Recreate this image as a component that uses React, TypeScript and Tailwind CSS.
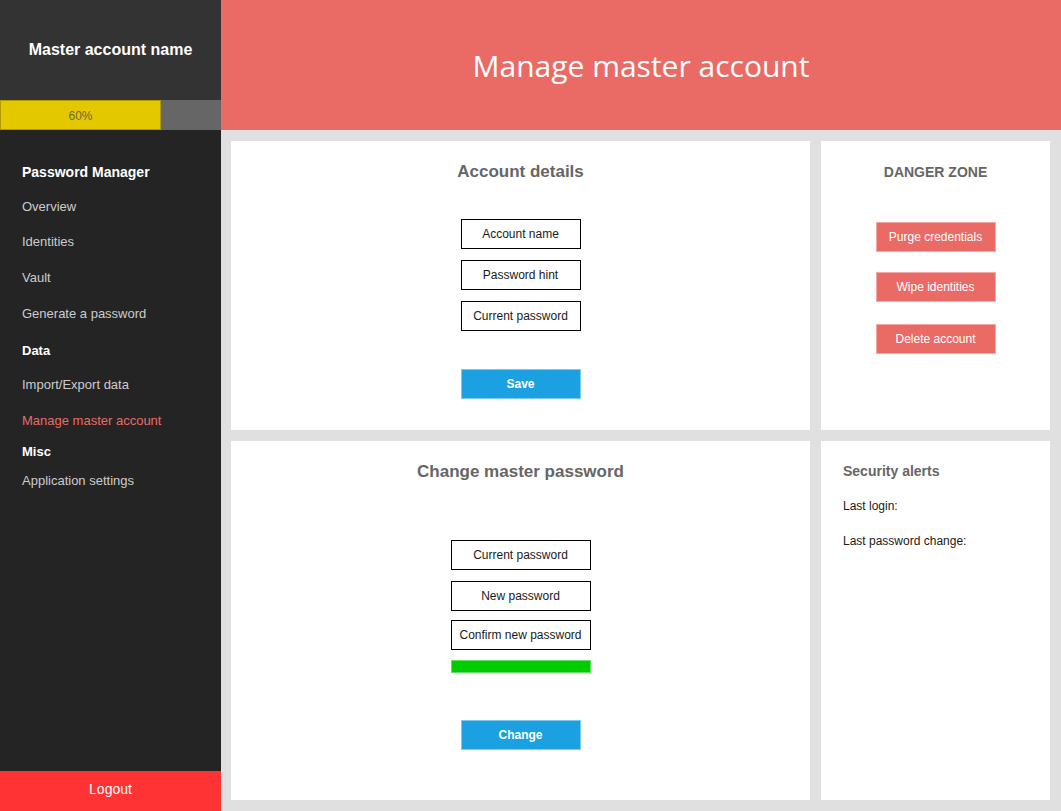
const navItems = [
  { label: "Password Manager", kind: "head" },
  { label: "Overview", kind: "item" },
  { label: "Identities", kind: "item" },
  { label: "Vault", kind: "item" },
  { label: "Generate a password", kind: "item" },
  { label: "Data", kind: "head" },
  { label: "Import/Export data", kind: "item" },
  { label: "Manage master account", kind: "active" },
  { label: "Misc", kind: "head" },
  { label: "Application settings", kind: "item" },
];

// vertical centre of each nav label, in page pixels
const navCentres = [171, 206, 241, 277, 313, 350, 384, 420, 451, 480];

function Field({ label, width }: { label: string; width: string }) {
  return (
    <div
      className={`${width} flex h-[30px] items-center justify-center border border-black bg-white text-[12px] text-[#1a1a1a]`}
    >
      {label}
    </div>
  );
}

function BlueButton({ label }: { label: string }) {
  return (
    <div className="flex h-[30px] w-[120px] items-center justify-center border border-[#7fcaf0] bg-[#1ba1e2] text-[12px] font-bold text-white">
      {label}
    </div>
  );
}

function DangerButton({ label }: { label: string }) {
  return (
    <div className="flex h-[30px] w-[120px] items-center justify-center border border-[#f5a8a5] bg-[#ea6b66] text-[12px] text-white">
      {label}
    </div>
  );
}

export default function App() {
  return (
    <div
      className="flex h-[811px] w-[1061px] overflow-hidden bg-[#e0e0e0]"
      style={{ fontFamily: '"Liberation Sans", Arial, sans-serif' }}
    >
      {/* sidebar */}
      <aside className="flex w-[221px] shrink-0 flex-col bg-[#242424]">
        <div className="flex h-[100px] items-center justify-center bg-[#333333] text-[16px] font-bold text-white">
          Master account name
        </div>
        <div className="flex h-[30px]">
          <div className="flex w-[161px] items-center justify-center border border-[#b09a00] bg-[#e3c800] pt-[2px] text-[12px] text-[#6b6b3a]">
            60%
          </div>
          <div className="flex-1 bg-[#666666]" />
        </div>
        <nav className="relative flex-1">
          {navItems.map((n, i) => (
            <div
              key={n.label}
              className={`absolute left-[22px] text-[13px] leading-[14px] ${
                n.kind === "head"
                  ? "font-bold text-white"
                  : n.kind === "active"
                    ? "text-[#ea6b66]"
                    : "text-[#cccccc]"
              } ${n.kind === "head" && i === 0 ? "text-[14px]" : ""}`}
              style={{ top: navCentres[i] - 130 - 6 }}
            >
              {n.label}
            </div>
          ))}
        </nav>
        <div className="flex h-[40px] items-center justify-center bg-[#ff3333] pb-[3px] text-[14px] text-white">
          Logout
        </div>
      </aside>

      {/* main */}
      <main className="flex flex-1 flex-col">
        <header
          className="flex h-[130px] items-center justify-center bg-[#ea6b66] text-[30px] text-white"
          style={{ fontFamily: '"Open Sans", "DejaVu Sans", sans-serif' }}
        >
          Manage master account
        </header>
        <div className="grid flex-1 grid-cols-[579px_229px] grid-rows-[289px_359px] gap-[11px] pb-[11px] pl-[10px] pt-[11px]">
          {/* account details */}
          <section className="flex flex-col items-center bg-white">
            <h2 className="mt-[18px] text-[17px] font-bold text-[#666666]">Account details</h2>
            <div className="mt-[34px] flex flex-col gap-[11px]">
              <Field label="Account name" width="w-[120px]" />
              <Field label="Password hint" width="w-[120px]" />
              <Field label="Current password" width="w-[120px]" />
            </div>
            <div className="mt-[38px]">
              <BlueButton label="Save" />
            </div>
          </section>

          {/* danger zone */}
          <section className="flex flex-col items-center bg-white">
            <h2 className="mt-[21px] text-[14px] font-bold text-[#666666]">DANGER ZONE</h2>
            <div className="mt-[39px] flex flex-col gap-[20px]">
              <DangerButton label="Purge credentials" />
              <DangerButton label="Wipe identities" />
              <div className="mt-[2px]">
                <DangerButton label="Delete account" />
              </div>
            </div>
          </section>

          {/* change password */}
          <section className="flex flex-col items-center bg-white">
            <h2 className="mt-[18px] text-[17px] font-bold text-[#666666]">Change master password</h2>
            <div className="mt-[55px] flex flex-col gap-[11px]">
              <Field label="Current password" width="w-[140px]" />
              <Field label="New password" width="w-[140px]" />
              <div className="-mt-[2px]">
                <Field label="Confirm new password" width="w-[140px]" />
              </div>
              <div className="-mt-[1px] h-[13px] w-[140px] border border-[#66dd66] bg-[#00cc00]" />
            </div>
            <div className="mt-[47px]">
              <BlueButton label="Change" />
            </div>
          </section>

          {/* security alerts */}
          <section className="flex flex-col bg-white pl-[22px]">
            <h2 className="mt-[20px] text-[14px] font-bold text-[#666666]">Security alerts</h2>
            <p className="mt-[15px] text-[12px] text-[#1a1a1a]">Last login:</p>
            <p className="mt-[17px] text-[12px] text-[#1a1a1a]">Last password change:</p>
          </section>
        </div>
      </main>
    </div>
  );
}
